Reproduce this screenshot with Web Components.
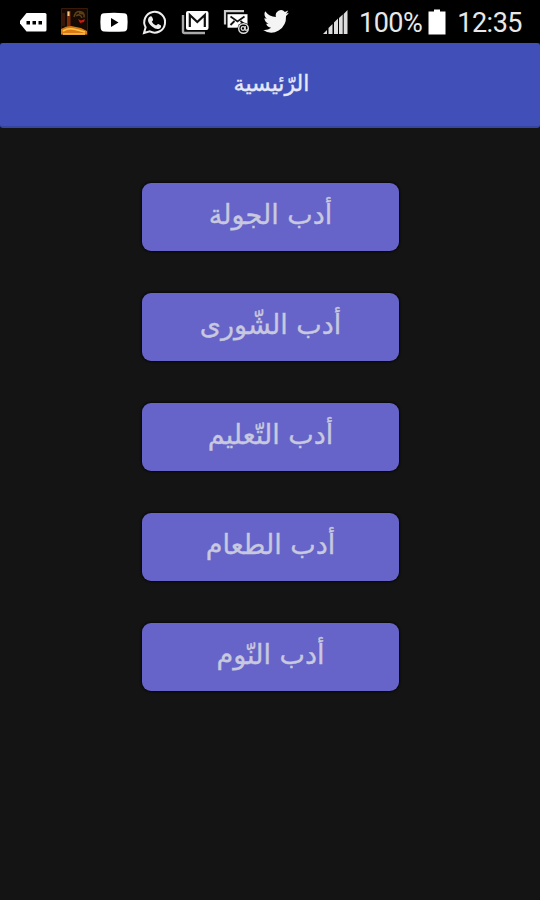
<!DOCTYPE html>
<html lang="ar">
<head>
<meta charset="utf-8">
<title>الرّئيسية</title>
<style>
  html, body { margin: 0; height: 100%; background: #141414; }
  body { overflow: hidden; }
</style>
</head>
<body>
<app-screen>
  <status-bar slot="status" battery="100%" time="12:35"></status-bar>
  <title-bar slot="title">الرّئيسية</title-bar>
  <menu-button>أدب الجولة</menu-button>
  <menu-button>أدب الشّورى</menu-button>
  <menu-button>أدب التّعليم</menu-button>
  <menu-button>أدب الطعام</menu-button>
  <menu-button>أدب النّوم</menu-button>
</app-screen>

<script>
(function () {
  class AppScreen extends HTMLElement {
    constructor() {
      super();
      this.attachShadow({ mode: "open" }).innerHTML = `
    <style>
      :host {
        display: flex;
        flex-direction: column;
        box-sizing: border-box;
        height: 900px;
        background: #141414;
        border-bottom: 1px solid #1c0f15;
      }
      .menu {
        display: flex;
        flex-direction: column;
        align-items: center;
        gap: 41.9px;
        padding: 55px 0 0 1px;
      }
    </style>
    <slot name="status"></slot>
    <slot name="title"></slot>
    <div class="menu"><slot></slot></div>
    `;
    }
  }

  class StatusBar extends HTMLElement {
    constructor() {
      super();
      this.attachShadow({ mode: "open" }).innerHTML = `
    <style>
      :host {
        display: flex;
        align-items: center;
        box-sizing: border-box;
        height: 43px;
        padding: 0 18px 0 19px;
        background: #000;
        color: #e8e8e8;
        font: 27px/43px Roboto, sans-serif;
      }
      svg { display: block; flex: none; }
      .icons { display: flex; gap: 12.5px; }
      .icons svg { width: 28px; height: 30px; }
      .signal { margin-left: 33px; }
      .battery-level { width: 66px; margin-left: 11px; white-space: nowrap; }
      .battery { margin-left: 3px; }
      .time { margin-left: auto; white-space: nowrap; }
      span { position: relative; top: 2px; letter-spacing: -0.5px; }
    </style>
    <div class="icons">
      <svg viewBox="0 0 28 30">
        <path fill="#fff" d="M7.5 6H26q1.5 0 1.5 1.500V23q0 1.500-1.500 1.500H7.500L1 16.500v-2.500z"/>
        <path fill="#000" d="M7.500 14h3.500v3.500h-3.500zM13.500 14h3.500v3.500h-3.500zM19.500 14h3.500v3.500h-3.500z"/>
      </svg>
      <svg viewBox="0 0 28 30">
        <path fill="#160a04" stroke="#3a1a07" d="M1.500 1.500h26v26h-26z"/>
        <path fill="#7a2b0a" d="M7 4h3.500v16H7z"/>
        <path fill="#f4c879" d="M7.500 4.500h2v4.500h-2z"/>
        <path fill="#3a1708" d="M2 6h3v13H2z"/>
        <path fill="none" stroke="#5f4016" stroke-width="1.500" d="M14 10q1-5 5-5.500 6 0 5 6M16 9q4-3 6 2M19 6l4 1"/>
        <path fill="#c3200c" d="M18 12l3 1.500 4-1.500-1 3-4 1z"/>
        <path fill="#d97913" d="M1 22q5-3 10-3l10 2 6 3v3.500H1z"/>
        <path fill="none" stroke="#ffc64a" stroke-width="1.500" d="M3 24q5-3 10-2t12 3M3 27h22"/>
      </svg>
      <svg viewBox="0 0 28 30">
        <path fill="#fff" d="M4 6.200q10-.8 20 0 3 .2 3.300 3 .7 6 0 12-.3 3-3.300 3.200-10 .8-20 0-3-.2-3.300-3.200-.7-6 0-12 .3-2.800 3.300-3z"/>
        <path fill="#000" d="M11 11v9l7.500-4.500z"/>
      </svg>
      <svg viewBox="0 0 28 30">
        <path fill="none" stroke="#eee" stroke-width="2" d="M3 26l1.600-5.700A10.400 10.400 0 1 1 8.800 24.400z"/>
        <path fill="#eee" d="M9 9.500q1.500-.8 2.200.8l.9 2.200q.2.700-1.300 2.200 1.500 2.800 4.300 3.900 1.500-1.800 2.200-1.600l2.700 1.400q.5 2.700-2.500 3.500-2.700.6-6.500-2.400-4.300-3.800-4-6.800.2-2.200 2-3.200z"/>
      </svg>
      <svg viewBox="0 0 28 30">
        <path fill="none" stroke="#aaa" stroke-width="2.400" d="M2 8v16.500q0 1.500 1.500 1.500H24"/>
        <rect x="5" y="4" width="22.500" height="19" rx="2" fill="#fff"/>
        <path fill="none" stroke="#111" stroke-width="2.200" d="M8.800 20V8l7.500 7 7.500-7v12"/>
      </svg>
      <svg viewBox="0 0 28 30">
        <path fill="none" stroke="#ccc" stroke-width="2.200" d="M3 17.500V4.200h19"/>
        <path fill="#fff" d="M5.500 7.200h20v13.500h-20z"/>
        <path fill="none" stroke="#111" stroke-width="1.800" d="M8.500 9.500l7 5 7-5M8.500 18l4-4M22 17l-3.500-3"/>
        <circle cx="21.500" cy="21.500" r="6" fill="#000"/>
        <circle cx="21.500" cy="21.500" r="4.800" fill="none" stroke="#ddd" stroke-width="1.500"/>
        <circle cx="21" cy="21.500" r="1.800" fill="none" stroke="#ddd" stroke-width="1.300"/>
        <path fill="none" stroke="#ddd" stroke-width="1.300" d="M23.200 19v4q1.500 1 2.500-1"/>
      </svg>
      <svg viewBox="0 0 24 24" preserveAspectRatio="none">
        <path fill="#f4f4f4" d="M23 4.600a9 9 0 0 1-2.500.7 4.400 4.400 0 0 0 1.900-2.500 9 9 0 0 1-2.800 1.100 4.500 4.500 0 0 0-7.700 4.100A12.600 12.600 0 0 1 2.700 3.400a4.500 4.500 0 0 0 1.400 6 4.400 4.400 0 0 1-2-.6c0 2.200 1.400 4 3.500 4.500a4.500 4.500 0 0 1-2 .1 4.500 4.500 0 0 0 4.200 3.100A9 9 0 0 1 1 18.400 12.700 12.700 0 0 0 20.600 7.100 9 9 0 0 0 23 4.600z"/>
      </svg>
    </div>
    <svg class="signal" width="25" height="26" viewBox="0 0 25 26">
      <path fill="#ddd" d="M0 25l4-4v4zM5.500 19l4-4v10h-4zM11 13.500l4-4V25h-4zM16 9l3.700-3.500V25H16zM20.700 5L24.500 1v24h-3.800z"/>
    </svg>
    <span class="battery-level">${this.getAttribute("battery")}</span>
    <svg class="battery" width="18" height="26" viewBox="0 0 18 26">
      <path fill="#fff" d="M6 .5h6v2h5.500v23H.5v-23H6z"/>
    </svg>
    <span class="time">${this.getAttribute("time")}</span>
    `;
    }
  }

  class TitleBar extends HTMLElement {
    constructor() {
      super();
      this.attachShadow({ mode: "open" }).innerHTML = `
    <style>
      :host {
        display: flex;
        justify-content: center;
        box-sizing: border-box;
        height: 85px;
        padding: 21px 0 0 3px;
        border-radius: 3px;
        border-bottom: 2px solid #3646a0;
        background: #4050b8;
        color: #e6e8fa;
        direction: rtl;
        font: 22px/40px "DejaVu Sans", sans-serif;
        -webkit-text-stroke: 0.35px;
      }
    </style>
    <slot></slot>
    `;
    }
  }

  class MenuButton extends HTMLElement {
    constructor() {
      super();
      this.attachShadow({ mode: "open" }).innerHTML = `
    <style>
      :host { display: block; }
      button {
        display: block;
        width: 257px;
        height: 68px;
        margin: 0;
        padding: 0 0 4px;
        border: 0;
        border-radius: 9px;
        background: #6664c8;
        box-shadow: 0 0 2px 1px #08080c;
        color: #c8c9de;
        direction: rtl;
        font: 27px/60px "DejaVu Sans", sans-serif;
        -webkit-text-stroke: 0.35px;
      }
    </style>
    <button type="button"><slot></slot></button>
    `;
    }
  }

  customElements.define("app-screen", AppScreen);
  customElements.define("status-bar", StatusBar);
  customElements.define("title-bar", TitleBar);
  customElements.define("menu-button", MenuButton);
})();
</script>
</body>
</html>
